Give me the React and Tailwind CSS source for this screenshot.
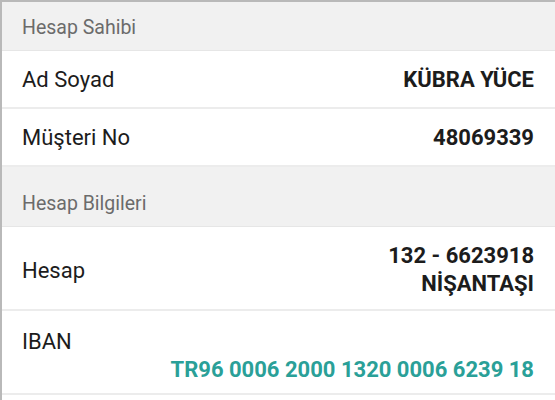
import React from 'react';

const Header = ({ title, first }) => (
  <div
    className={`h-[60px] bg-[#f1f1f1] border-b border-[#e6e6e6] px-[20px] pt-[25px] ${
      first ? '-mt-[11px]' : ''
    }`}
  >
    <span className="text-[19.5px] leading-[24px] text-[#6b6b6b]">{title}</span>
  </div>
);

const Row = ({ children, tall }) => (
  <div className={`flex bg-white border-b-2 border-[#ececec] pl-[20px] pr-[21px] ${tall ? 'h-[84px]' : 'h-[58px]'}`}>
    {children}
  </div>
);

export default function App() {
  return (
    <div
      className="w-[555px] h-[400px] overflow-hidden bg-white border-t-2 border-l-2 border-[#b9b9b9]"
      style={{ fontFamily: 'Roboto, "Noto Sans", sans-serif' }}
    >
      <Header title="Hesap Sahibi" first />

      <Row>
        <div className="flex flex-1 items-center justify-between">
          <span className="text-[22px] text-[#1c1c1c]">Ad Soyad</span>
          <span className="text-[22px] font-bold text-[#1c1c1c]">KÜBRA YÜCE</span>
        </div>
      </Row>

      <Row>
        <div className="flex flex-1 items-center justify-between">
          <span className="text-[22px] text-[#1c1c1c]">Müşteri No</span>
          <span className="text-[22px] font-bold text-[#1c1c1c]">48069339</span>
        </div>
      </Row>

      <Header title="Hesap Bilgileri" />

      <Row tall>
        <div className="flex flex-1 items-center justify-between pt-[4px]">
          <span className="text-[22px] text-[#1c1c1c]">Hesap</span>
          <div className="flex flex-col items-end text-[22px] leading-[28px] font-bold text-[#1c1c1c]">
            <span>132 - 6623918</span>
            <span>NİŞANTAŞI</span>
          </div>
        </div>
      </Row>

      <Row tall>
        <div className="flex flex-1 flex-col pt-[17px]">
          <span className="text-[22px] leading-[28px] text-[#1c1c1c]">IBAN</span>
          <span className="self-end text-[22px] leading-[28px] font-bold text-[#2aa098]">
            TR96 0006 2000 1320 0006 6239 18
          </span>
        </div>
      </Row>
    </div>
  );
}
